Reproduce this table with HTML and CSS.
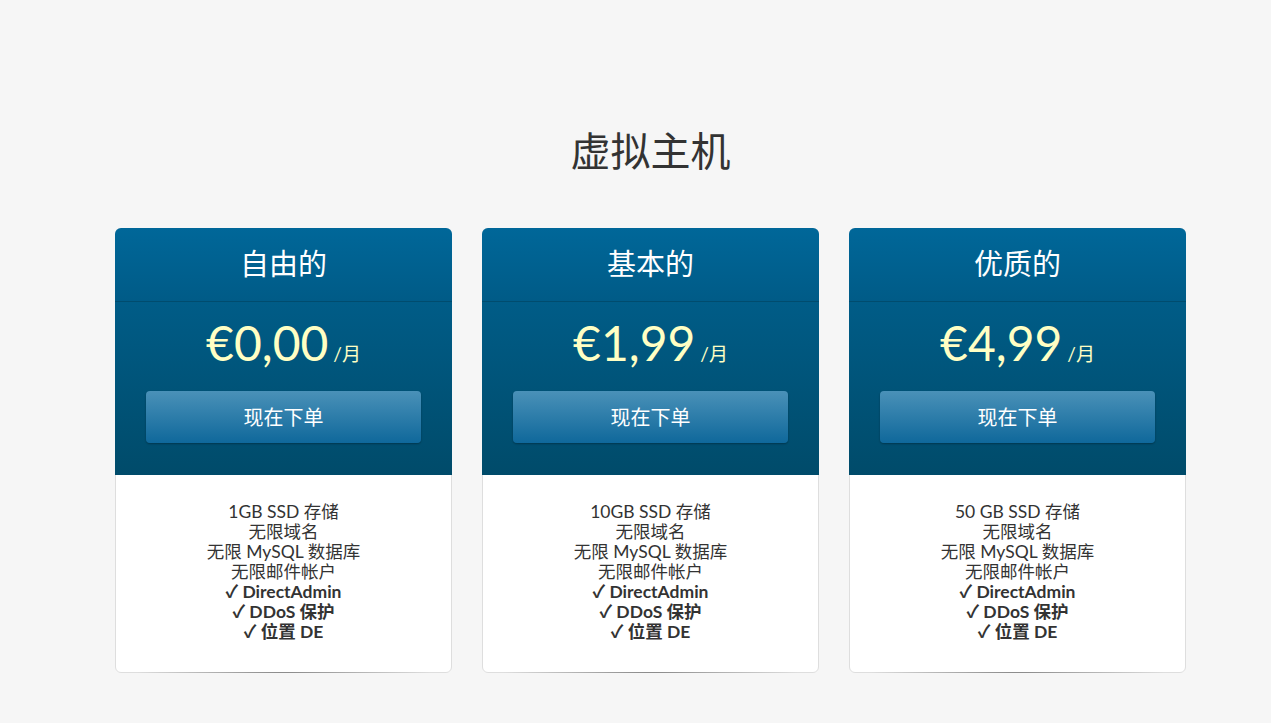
FILE: index.html
```html
<!DOCTYPE html>
<html lang="zh">
<head>
<meta charset="utf-8">
<link rel="stylesheet" href="styles.css">
</head>
<body>
<div class="page">
  <h1 class="title">虚拟主机</h1>
  <div class="cards">
    <div class="card">
      <div class="card-head">自由的</div>
      <div class="card-price">
        <div class="price"><span class="amount">€0,00</span><span class="per">/月</span></div>
        <a class="btn">现在下单</a>
      </div>
      <ul class="features">
        <li>1GB SSD 存储</li>
        <li>无限域名</li>
        <li>无限 MySQL 数据库</li>
        <li>无限邮件帐户</li>
        <li class="b">✓ DirectAdmin</li>
        <li class="b">✓ DDoS 保护</li>
        <li class="b">✓ 位置 DE</li>
      </ul>
    </div>
    <div class="card">
      <div class="card-head">基本的</div>
      <div class="card-price">
        <div class="price"><span class="amount">€1,99</span><span class="per">/月</span></div>
        <a class="btn">现在下单</a>
      </div>
      <ul class="features">
        <li>10GB SSD 存储</li>
        <li>无限域名</li>
        <li>无限 MySQL 数据库</li>
        <li>无限邮件帐户</li>
        <li class="b">✓ DirectAdmin</li>
        <li class="b">✓ DDoS 保护</li>
        <li class="b">✓ 位置 DE</li>
      </ul>
    </div>
    <div class="card">
      <div class="card-head">优质的</div>
      <div class="card-price">
        <div class="price"><span class="amount">€4,99</span><span class="per">/月</span></div>
        <a class="btn">现在下单</a>
      </div>
      <ul class="features">
        <li>50 GB SSD 存储</li>
        <li>无限域名</li>
        <li>无限 MySQL 数据库</li>
        <li>无限邮件帐户</li>
        <li class="b">✓ DirectAdmin</li>
        <li class="b">✓ DDoS 保护</li>
        <li class="b">✓ 位置 DE</li>
      </ul>
    </div>
  </div>
</div>
</body>
</html>
```

FILE: styles.css
```css
html {
  background: #f6f6f6;
}
body {
  margin: 0;
  padding: 0;
  font-family: "Lato", "Noto Sans CJK SC", sans-serif;
  color: #333;
}
.page {
  padding-top: 124px;
}
.title {
  margin: 0;
  text-align: center;
  font-family: "Noto Sans CJK SC", sans-serif;
  font-weight: 400;
  font-size: 40px;
  line-height: 50px;
  color: #333;
  padding-left: 30px;
}
.cards {
  display: flex;
  gap: 30px;
  padding-left: 115px;
  margin-top: 54px;
}
.card {
  position: relative;
  width: 337px;
  background: #fff;
  border: 1px solid #dedede;
  border-radius: 6px;
  box-sizing: border-box;
}
.card::after {
  content: "";
  position: absolute;
  left: 20px;
  right: 20px;
  bottom: -6px;
  height: 6px;
  background: radial-gradient(ellipse 50% 100% at 50% 0, rgba(0,0,0,0.4), rgba(0,0,0,0.12) 70%, rgba(0,0,0,0) 100%);
}
.card-head {
  height: 73px;
  margin: -1px -1px 0;
  border-radius: 6px 6px 0 0;
  background: linear-gradient(#006799, #005b87);
  border-bottom: 1px solid #004c6e;
  color: #fff;
  text-align: center;
  font-family: "Noto Sans CJK SC", sans-serif;
  font-size: 29px;
  line-height: 68px;
}
.card-price {
  margin: 0 -1px;
  height: 173px;
  background: linear-gradient(#005c87, #004b6a);
  box-sizing: border-box;
  padding-top: 10px;
  display: flex;
  flex-direction: column;
  align-items: center;
}
.price {
  color: #ffffc4;
  display: flex;
  align-items: baseline;
  height: 62px;
}
.amount {
  font-size: 48px;
  line-height: 62px;
  font-weight: 400;
}
.per {
  font-size: 19px;
  margin-left: 5px;
  font-family: "Lato", "Noto Sans CJK SC", sans-serif;
}
.btn {
  display: block;
  margin-top: 17px;
  width: 275px;
  height: 52px;
  border-radius: 4px;
  background: linear-gradient(#4a91b8, #0f689b);
  box-shadow: 0 1px 2px rgba(0,0,0,0.3);
  color: #fff;
  text-align: center;
  font-family: "Noto Sans CJK SC", sans-serif;
  font-size: 20px;
  line-height: 52px;
}
.features {
  list-style: none;
  margin: 0;
  padding: 27px 0 28px;
  height: 197px;
  box-sizing: border-box;
  text-align: center;
  font-size: 17.5px;
  line-height: 20px;
  color: #333;
}
.features .b {
  font-weight: 700;
}
```
